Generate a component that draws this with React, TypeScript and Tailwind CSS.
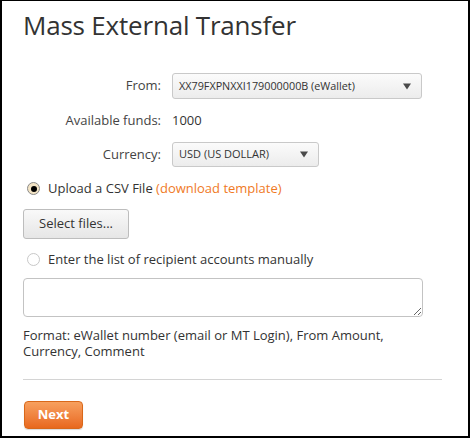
import { useState } from 'react'

type Mode = 'csv' | 'manual'

function Caret() {
  return (
    <svg width="8" height="7" viewBox="0 0 8 7" className="shrink-0">
      <path d="M0 0.5 H8 L4 6.5 Z" fill="#4a4a4a" />
    </svg>
  )
}

function Radio({ checked, onClick }: { checked: boolean; onClick: () => void }) {
  return (
    <button
      onClick={onClick}
      className={`w-[13px] h-[13px] rounded-full border flex items-center justify-center shrink-0 ${
        checked ? 'border-[#8a8a8a] bg-[#f3e4c5]' : 'border-[#c8c8c8] bg-white'
      }`}
    >
      {checked && <span className="w-[6px] h-[6px] rounded-full bg-black" />}
    </button>
  )
}

export default function App() {
  const [mode, setMode] = useState<Mode>('csv')

  return (
    <div
      className="w-[470px] h-[438px] bg-white border-black border-t border-l-2 border-r-2 border-b-2 text-[#333] text-[13px] overflow-hidden"
      style={{ fontFamily: '"Open Sans", "Noto Sans", sans-serif' }}
    >
      <div className="px-[21px]">
        <h1 className="text-[26px] leading-none text-[#333] pt-[11px] tracking-[-0.2px]">Mass External Transfer</h1>

        <div className="mt-[35px] grid grid-cols-[138px_1fr] gap-x-[11px] gap-y-[11px] items-center pr-[25px]">
          <div className="text-right text-[#444]">From:</div>
          <div className="h-[26px] rounded-[3px] border border-[#c9c9c9] bg-gradient-to-b from-[#fbfbfb] to-[#ececec] flex items-center justify-between pl-[6px] pr-[10px] text-[10.8px] text-[#333]">
            <span>XX79FXPNXXI179000000B (eWallet)</span>
            <Caret />
          </div>

          <div className="text-right text-[#444] h-[21px] leading-[21px]">Available funds:</div>
          <div className="h-[21px] leading-[21px]">1000</div>

          <div className="text-right text-[#444]">Currency:</div>
          <div className="w-[147px] h-[25px] rounded-[3px] border border-[#c9c9c9] bg-gradient-to-b from-[#fbfbfb] to-[#ececec] flex items-center justify-between pl-[6px] pr-[10px] text-[11px]">
            <span>USD (US DOLLAR)</span>
            <Caret />
          </div>
        </div>

        <div className="mt-[12px] flex items-center gap-[8px] pl-[4px]">
          <Radio checked={mode === 'csv'} onClick={() => setMode('csv')} />
          <span>
            Upload a CSV File <span className="text-[#f07a1f]">(download template)</span>
          </span>
        </div>

        <button className="mt-[10px] w-[106px] h-[30px] rounded-[3px] border border-[#bdbdbd] bg-gradient-to-b from-[#f9f9f9] to-[#e6e6e6] text-[13px] text-[#333]">
          Select files...
        </button>

        <div className="mt-[11px] flex items-center gap-[8px] pl-[4px]">
          <Radio checked={mode === 'manual'} onClick={() => setMode('manual')} />
          <span>Enter the list of recipient accounts manually</span>
        </div>

        <textarea className="mt-[9px] block w-[400px] h-[39px] rounded-[4px] border border-[#c3c3c3] resize-y" />

        <p className="mt-[10px] leading-[16px] pr-[40px]">
          Format: eWallet number (email or MT Login), From Amount, Currency, Comment
        </p>

        <hr className="mt-[20px] mr-[5px] border-t border-[#d4d4d4]" />

        <button className="mt-[21px] ml-[1px] w-[59px] h-[28px] rounded-[4px] border border-[#d9681a] bg-gradient-to-b from-[#f7a05e] to-[#e8681c] text-white font-bold text-[13px] shadow-[0_1px_1px_rgba(0,0,0,0.15)]">
          Next
        </button>
      </div>
    </div>
  )
}
